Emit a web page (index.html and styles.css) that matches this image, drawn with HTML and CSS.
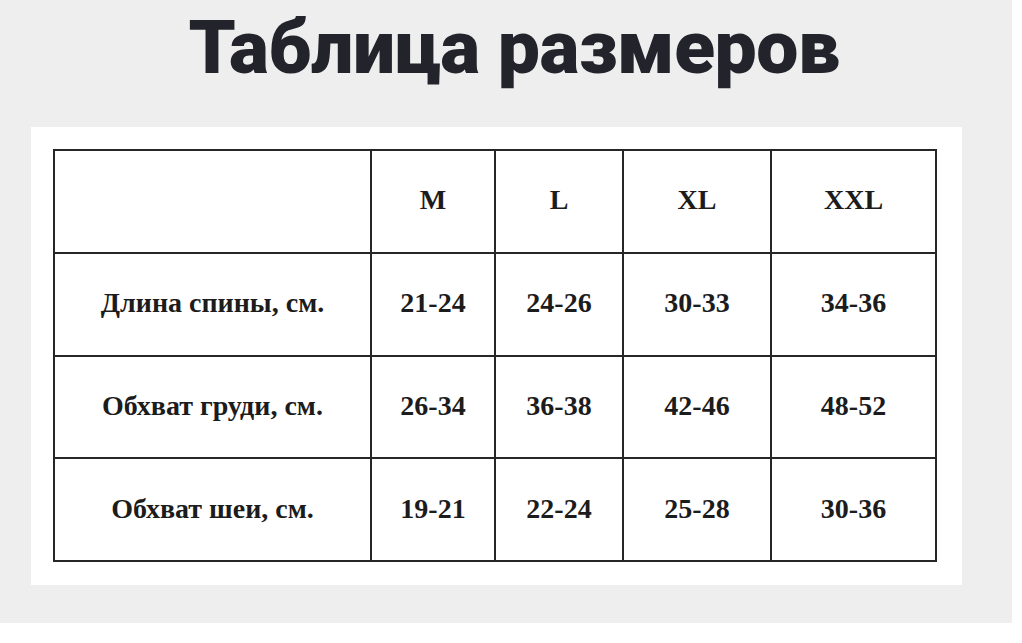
FILE: index.html
```html
<!DOCTYPE html>
<html lang="ru">
<head>
<meta charset="utf-8">
<title>Таблица размеров</title>
<link rel="stylesheet" href="styles.css">
</head>
<body>
<div class="page">
  <h1 class="title">Таблица размеров</h1>
  <div class="panel">
    <table class="sizes">
      <colgroup>
        <col class="c-label">
        <col class="c-m">
        <col class="c-l">
        <col class="c-xl">
        <col class="c-xxl">
      </colgroup>
      <tr><th></th><th>M</th><th>L</th><th>XL</th><th>XXL</th></tr>
      <tr><td>Длина спины, см.</td><td>21-24</td><td>24-26</td><td>30-33</td><td>34-36</td></tr>
      <tr><td>Обхват груди, см.</td><td>26-34</td><td>36-38</td><td>42-46</td><td>48-52</td></tr>
      <tr><td>Обхват шеи, см.</td><td>19-21</td><td>22-24</td><td>25-28</td><td>30-36</td></tr>
    </table>
  </div>
</div>
</body>
</html>
```

FILE: styles.css
```css
html, body {
  margin: 0;
  padding: 0;
  background: #ffffff;
}

.page {
  width: 1012px;
  height: 623px;
  background: #eeeeee;
  box-sizing: border-box;
  padding-top: 3px;
}

.title {
  margin: 0;
  height: 124px;
  box-sizing: border-box;
  text-align: center;
  font-family: "Roboto", "Inter", "DejaVu Sans", sans-serif;
  font-weight: 900;
  font-size: 75px;
  line-height: 88px;
  letter-spacing: -0.5px;
  color: #23242b;
  padding-left: 16px;
}

.panel {
  margin-left: 31px;
  width: 931px;
  height: 458px;
  background: #ffffff;
  box-sizing: border-box;
  padding: 22px 0 0 22px;
}

.sizes {
  border-collapse: collapse;
  width: 884px;
  height: 413px;
  font-family: "Liberation Serif", "Times New Roman", serif;
  font-weight: 700;
  font-size: 28px;
  color: #1c1c1c;
}

.sizes th,
.sizes td {
  border: 2px solid #262626;
  text-align: center;
  vertical-align: middle;
  padding: 0 0 2px 0;
  font-weight: 700;
}

.c-label { width: 317px; }
.c-m { width: 124px; }
.c-l { width: 128px; }
.c-xl { width: 148px; }
.c-xxl { width: 165px; }
```
